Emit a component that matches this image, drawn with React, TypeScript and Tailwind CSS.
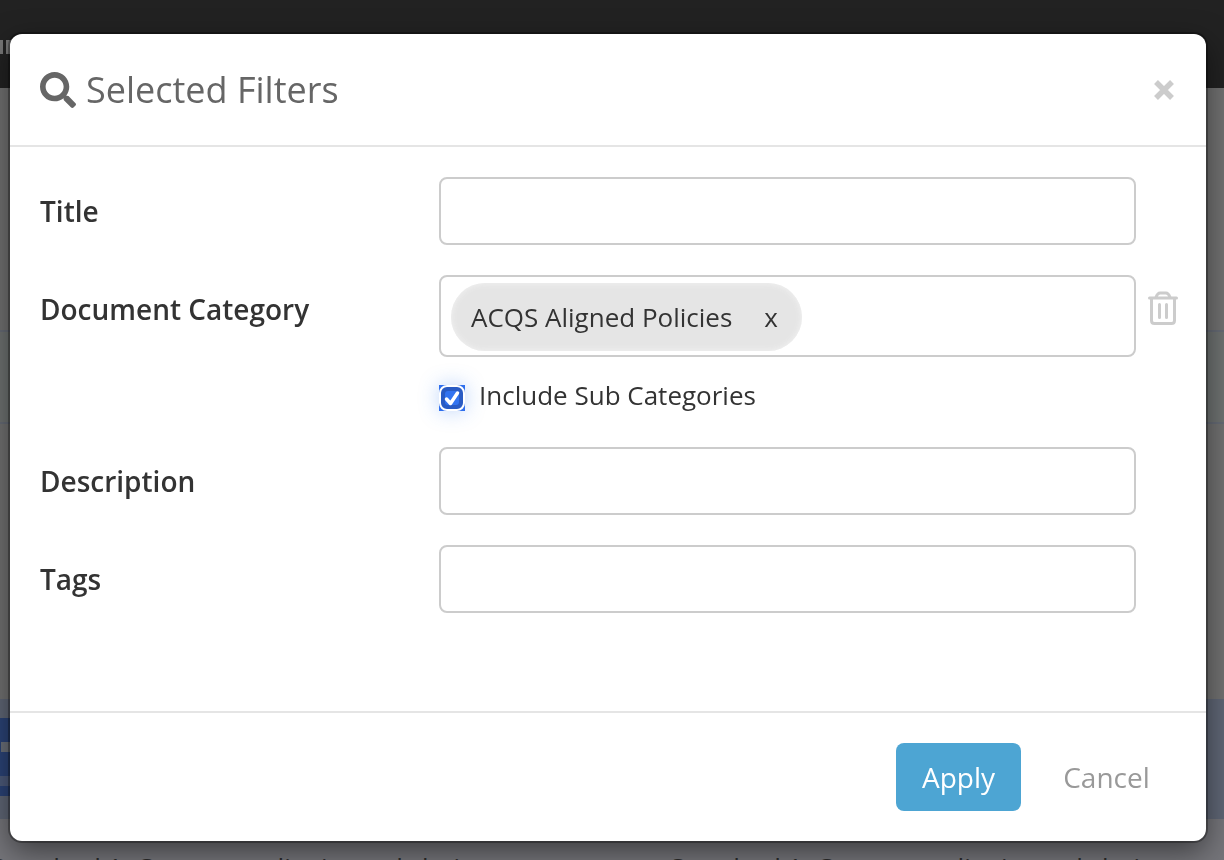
import React from 'react';
import { FaSearch } from 'react-icons/fa';

const standards = ['Standard 1: Consumer dignity and choice', 'Standard 1: Consumer dignity and choice'];

const inputClass = 'block w-full h-[68px] px-5 text-[26px] bg-white border-2 border-[#cccccc] rounded-lg outline-none';
const labelClass = 'w-[399px] shrink-0 pt-4 text-[28px] leading-9 font-semibold text-[#333333]';

const PageBehind: React.FC = () => (
  <div aria-hidden="true" className="fixed inset-0 overflow-hidden flex flex-col bg-[#717171]">
    <div className="h-[88px] shrink-0 flex bg-[#222222]">
      <div className="mt-10 h-[14px] w-[3px] bg-[#777777]"></div>
      <div className="mt-10 ml-[3px] h-[14px] w-5 bg-[#777777]"></div>
    </div>
    <div className="h-[242px] shrink-0"></div>
    <div className="h-[94px] shrink-0 border-y-2 border-[#666b75] bg-[#6e7271]"></div>
    <div className="h-[275px] shrink-0"></div>
    <div className="h-[120px] shrink-0 pt-[19px] bg-[#5f6675]">
      <div className="w-1/2 h-[58px] pt-6 bg-[#2b4376]">
        <div className="ml-px w-10 h-[10px] bg-[#6b7079]"></div>
      </div>
      <div className="w-1/2 h-[10px] bg-[#4c5a7a]"></div>
      <div className="w-1/2 h-[10px] bg-[#2b4376]"></div>
    </div>
    <div className="grow bg-[#75757a] pt-[30px] flex">
      {standards.map((name, index) => (
        <p key={index} className="w-[680px] shrink-0 -ml-[10px] mr-[10px] text-[26px] leading-9 text-[#2a2a2a] whitespace-nowrap">
          {name}
        </p>
      ))}
    </div>
  </div>
);

const TrashIcon: React.FC = () => (
  <svg width="30" height="34" viewBox="0 0 30 34" fill="none" stroke="#cccccc">
    <path d="M1.5 7h27" strokeWidth="3" strokeLinecap="round" />
    <path d="M8 6.5c1-3 2-4.5 4-4.5h6c2 0 3 1.5 4 4.5" strokeWidth="3" />
    <path d="M3.5 8v21.500q0 3 3 3h17q3 0 3-3V8" strokeWidth="3" />
    <path d="M11.500 13.500v13M18.500 13.500v13" strokeWidth="3" strokeLinecap="round" />
  </svg>
);

const App: React.FC = () => {
  return (
    <div className="min-h-screen font-['Open_Sans',sans-serif] text-[#333333]">
      <PageBehind />

      <div className="relative pt-[34px] pl-[10px] pr-[18px]">
        <div
          role="dialog"
          aria-labelledby="filters-title"
          className="bg-white rounded-xl shadow-[0_0_0_2px_rgba(0,0,0,0.3),0_10px_30px_rgba(0,0,0,0.5)]"
        >
          <div className="flex items-center justify-between h-[113px] pl-[30px] pr-8 border-b-2 border-[#e5e5e5]">
            <h2 id="filters-title" className="flex items-center gap-[10px] text-[36px] leading-[50px] text-[#666666]">
              <FaSearch size={36} />
              Selected Filters
            </h2>
            <button type="button" aria-label="Close">
              <svg width="20" height="20" viewBox="0 0 20 20" stroke="#cccccc" strokeWidth="5.5">
                <path d="M2 2l16 16M18 2L2 18" />
              </svg>
            </button>
          </div>

          <form id="filters" className="flex flex-col gap-[30px] pt-[30px] pb-[98px] pl-[30px] pr-[70px]">
            <div className="flex">
              <label htmlFor="title" className={labelClass}>Title</label>
              <input id="title" type="text" className={inputClass} />
            </div>

            <div className="flex">
              <label htmlFor="category" className={labelClass}>Document Category</label>
              <div className="grow min-w-0">
                <div className="flex -mr-[42px]">
                  <div className="grow min-w-0 flex items-center h-[82px] px-[10px] pt-px border-2 border-[#cccccc] rounded-lg">
                    <span className="shrink-0 flex items-center h-[68px] pl-5 pr-6 rounded-full bg-[#e5e5e5] text-[26px] leading-9 shadow-[inset_0_0_6px_#f4f4f4]">
                      ACQS Aligned Policies
                      <button type="button" aria-label="Remove ACQS Aligned Policies" className="ml-8">x</button>
                    </span>
                    <input id="category" type="text" className="grow min-w-0 h-full ml-2 text-[26px] outline-none" />
                  </div>
                  <button type="button" aria-label="Clear document category" className="shrink-0 self-start mt-4 ml-3">
                    <TrashIcon />
                  </button>
                </div>
                <div className="flex items-start mt-5 h-10">
                  <span className="relative mt-2 size-[26px] bg-[#2f6fee] shadow-[0_0_20px_rgba(60,130,240,0.35)]">
                    <input
                      id="sub-categories"
                      type="checkbox"
                      defaultChecked
                      className="block appearance-none size-[26px] rounded-lg border-2 border-white bg-[#295bc4]"
                    />
                    <svg className="absolute inset-0 pointer-events-none" width="26" height="26" viewBox="0 0 26 26" fill="none">
                      <rect x="6" y="6" width="14" height="14" rx="3" fill="#3273f0" />
                      <path d="M7.500 14l4 4.500L18.500 8" stroke="#ffffff" strokeWidth="3.5" strokeLinecap="round" strokeLinejoin="round" />
                    </svg>
                  </span>
                  <label htmlFor="sub-categories" className="ml-[14px] text-[26px] leading-9">Include Sub Categories</label>
                </div>
              </div>
            </div>

            <div className="flex">
              <label htmlFor="description" className={labelClass}>Description</label>
              <input id="description" type="text" className={inputClass} />
            </div>

            <div className="flex">
              <label htmlFor="tags" className={labelClass}>Tags</label>
              <input id="tags" type="text" className={inputClass} />
            </div>
          </form>

          <div className="flex justify-end items-center gap-[18px] h-[130px] pr-8 border-t-2 border-[#e5e5e5]">
            <button type="submit" form="filters" className="h-[68px] w-[125px] rounded-lg bg-[#4da5d3] text-[28px] text-white">
              Apply
            </button>
            <button type="button" className="h-[68px] w-[135px] text-[28px] text-[#999999]">
              Cancel
            </button>
          </div>
        </div>
      </div>
    </div>
  );
};

export default App;
